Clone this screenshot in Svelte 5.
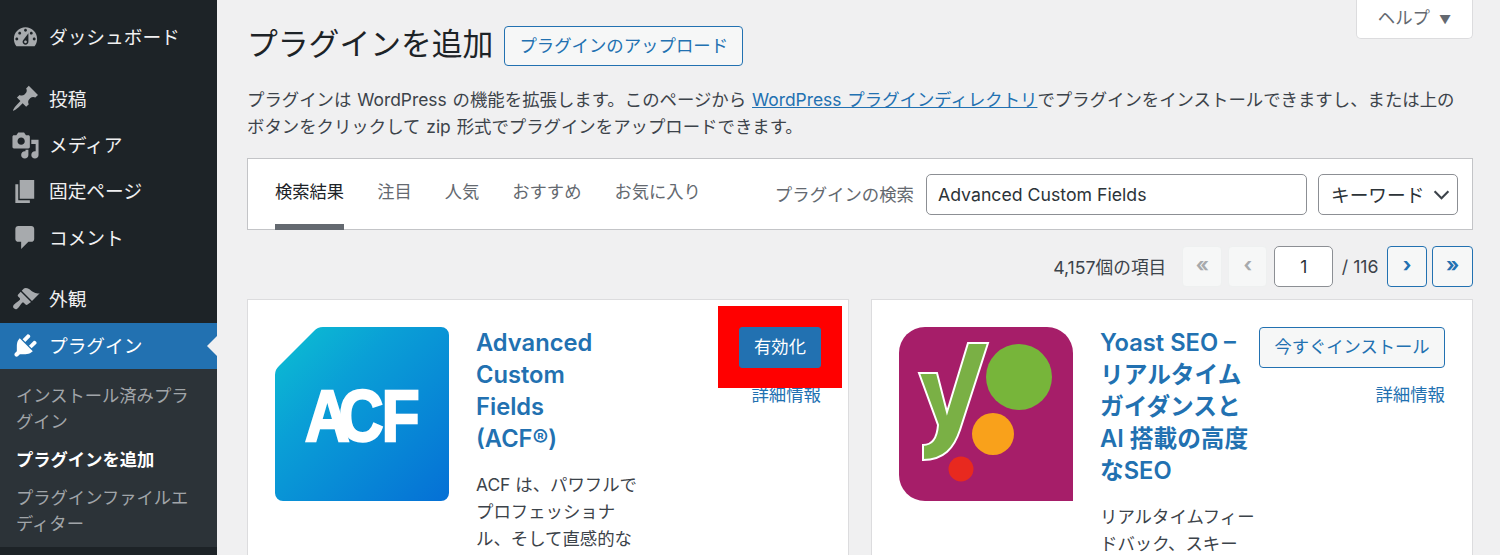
<script>
  const menu = [
    { label: 'ダッシュボード', d: 'M3.76 16h12.48c1.1-1.37 1.76-3.11 1.76-5 0-4.42-3.58-8-8-8s-8 3.58-8 8c0 1.89.66 3.63 1.76 5zM10 4c.55 0 1 .45 1 1s-.45 1-1 1-1-.45-1-1 .45-1 1-1zM6 6c.55 0 1 .45 1 1s-.45 1-1 1-1-.45-1-1 .45-1 1-1zm8 0c.55 0 1 .45 1 1s-.45 1-1 1-1-.45-1-1 .45-1 1-1zm-5.37 5.55L12 7v6c0 1.1-.9 2-2 2s-2-.9-2-2c0-.57.24-1.08.63-1.45zM4 10c.55 0 1 .45 1 1s-.45 1-1 1-1-.45-1-1 .45-1 1-1zm12 0c.55 0 1 .45 1 1s-.45 1-1 1-1-.45-1-1 .45-1 1-1zm-5 3c0-.55-.45-1-1-1s-1 .45-1 1 .45 1 1 1 1-.45 1-1z', gap: true },
    { label: '投稿', d: 'M10.44 3.02l1.82-1.82 6.36 6.35-1.83 1.82c-1.05-.68-2.48-.57-3.41.36l-.75.75c-.92.93-1.04 2.35-.35 3.41l-1.83 1.82-2.41-2.41-2.8 2.79c-.42.42-3.38 2.71-3.8 2.29s1.86-3.39 2.28-3.81l2.79-2.79L4.1 9.36l1.83-1.82c1.05.69 2.48.57 3.4-.36l.75-.75c.93-.92 1.05-2.35.36-3.41z' },
    { label: 'メディア', d: 'M13 11V4c0-.55-.45-1-1-1h-1.67L9 1H5L3.67 3H2c-.55 0-1 .45-1 1v7c0 .55.45 1 1 1h10c.55 0 1-.45 1-1zM7 4.5c1.38 0 2.5 1.12 2.5 2.5S8.38 9.5 7 9.5 4.5 8.38 4.5 7 5.62 4.5 7 4.5zM14 6h5v10.5c0 1.38-1.12 2.5-2.5 2.5S14 17.88 14 16.5s1.12-2.5 2.5-2.5c.17 0 .34.02.5.05V9h-3V6zm-4 8.05V13h2v3.5c0 1.38-1.12 2.5-2.5 2.5S7 17.88 7 16.5 8.12 14 9.5 14c.17 0 .34.02.5.05z' },
    { label: '固定ページ', d: 'M6 15V2h10v13H6zm-1 1h8v2H3V5h2v11z' },
    { label: 'コメント', d: 'M5 2h9c1.1 0 2 .9 2 2v7c0 1.1-.9 2-2 2h-2l-5 5v-5H5c-1.1 0-2-.9-2-2V4c0-1.1.9-2 2-2z', gap: true },
    { label: '外観', d: 'M14.48 11.06L7.41 3.99l1.5-1.5c.5-.56 2.3-.47 3.51.32 1.21.8 1.43 1.28 2.91 2.1 1.18.64 2.45 1.26 4.45.85zm-.71.71L6.7 4.7 4.93 6.47c-.39.39-.39 1.02 0 1.41l1.06 1.06c.39.39.39 1.03 0 1.42-.6.6-1.43 1.11-2.21 1.69-.35.26-.7.53-1.01.84C1.43 13.71.96 15.12 1.95 16.1c.99 1 2.4.53 3.07-.47.31-.31.58-.66.84-1 .58-.79 1.09-1.62 1.69-2.22.39-.39 1.03-.39 1.42 0l1.06 1.06c.39.39 1.02.39 1.41 0z' },
    { label: 'プラグイン', active: true, d: 'M13.11 4.36L9.87 7.6 8 5.73l3.24-3.24c.35-.34 1.05-.2 1.56.32.52.51.66 1.21.31 1.55zm-8 1.77l.91-1.12 9.01 9.01-1.19.84c-.71.71-2.63 1.16-3.82 1.16H6.14L4.9 17.26c-.59.59-1.54.59-2.12 0-.59-.58-.59-1.53 0-2.12l1.24-1.24v-3.88c0-1.13.4-3.19 1.09-3.89zm7.26 3.97l3.24-3.24c.34-.35 1.04-.21 1.55.31.52.51.66 1.21.31 1.55l-3.24 3.25z' }
  ];
  const tabs = ['検索結果', '注目', '人気', 'おすすめ', 'お気に入り'];
</script>

<div class="admin">
  <nav class="sidebar">
    <ul class="menu">
      {#each menu as item}
        <li class="item" class:active={item.active} class:gap={item.gap}>
          <svg class="ico" viewBox="0 0 20 20"><path d={item.d} /></svg>
          <span class="label">{item.label}</span>
        </li>
      {/each}
    </ul>
    <ul class="sub">
      <li>インストール済みプラグイン</li>
      <li class="current">プラグインを追加</li>
      <li>プラグインファイルエディター</li>
    </ul>
  </nav>

  <main class="content">
    <div class="help-row">
      <button class="help">ヘルプ<i class="tri">▼</i></button>
    </div>

    <div class="head">
      <h1>プラグインを追加</h1>
      <button class="upload">プラグインのアップロード</button>
    </div>

    <p class="intro">プラグインは WordPress の機能を拡張します。このページから <a href="#top">WordPress プラグインディレクトリ</a>でプラグインをインストールできますし、または上のボタンをクリックして zip 形式でプラグインをアップロードできます。</p>

    <div class="filter">
      <ul class="tabs">
        {#each tabs as t, i}
          <li class:on={i === 0}>{t}</li>
        {/each}
      </ul>
      <div class="search">
        <span class="search-label">プラグインの検索</span>
        <input class="search-input" value="Advanced Custom Fields" />
        <div class="select">
          <span class="select-text">キーワード</span>
          <svg viewBox="0 0 16 16" class="chev"><path d="M1.5 5L8 11.5 14.5 5" /></svg>
        </div>
      </div>
    </div>

    <div class="pager">
      <span class="count">4,157個の項目</span>
      <span class="pg off">«</span>
      <span class="pg off narrow">‹</span>
      <input class="page-no" value="1" />
      <span class="total">/ 116</span>
      <span class="pg">›</span>
      <span class="pg last">»</span>
    </div>

    <div class="cards">
      <section class="card">
        <svg class="plugin-icon" viewBox="0 0 174 174">
          <defs>
            <linearGradient id="acfg" x1="0" y1="0" x2="1" y2="1">
              <stop offset="0" stop-color="#0cc0d2" />
              <stop offset="0.35" stop-color="#0a9fd6" />
              <stop offset="1" stop-color="#0570d6" />
            </linearGradient>
          </defs>
          <path d="M48 0H166a8 8 0 0 1 8 8V166a8 8 0 0 1-8 8H8a8 8 0 0 1-8-8V48a12 12 0 0 1 4-9L39 4a12 12 0 0 1 9-4z" fill="url(#acfg)" />
          <text transform="scale(.86 1)" x="35 74 124" y="114" class="acf-mark">ACF</text>
        </svg>
        <div class="name-col wide">
          <h3 class="acf-name">Advanced Custom Fields (ACF®)</h3>
          <p class="desc">ACF は、パワフルでプロフェッショナル、そして直感的な</p>
        </div>
        <div class="actions">
          <div class="red">
            <button class="primary">有効化</button>
          </div>
          <a class="more" href="#top">詳細情報</a>
        </div>
      </section>

      <section class="card">
        <svg class="plugin-icon" viewBox="0 0 174 174">
          <path d="M26 0H148a26 26 0 0 1 26 26V174H26A26 26 0 0 1 0 148V26A26 26 0 0 1 26 0z" fill="#a61e69" />
          <path d="M20 46H38L48 85 69 16H89L61 103C55 121 45 133 24 133V118C33 118 38 112 39 98Z" fill="#7ab045" stroke="#fff" stroke-width="2" />
          <circle cx="120" cy="50" r="33" fill="#77b53a" />
          <circle cx="94" cy="107" r="21" fill="#f9a11b" />
          <circle cx="62" cy="142" r="12.5" fill="#e8291f" />
        </svg>
        <div class="name-col">
          <h3>Yoast SEO – リアルタイムガイダンスと AI 搭載の高度なSEO</h3>
          <p class="desc">リアルタイムフィー<br />ドバック、スキー</p>
        </div>
        <div class="actions">
          <button class="install">今すぐインストール</button>
          <a class="more" href="#top">詳細情報</a>
        </div>
      </section>
    </div>
  </main>
</div>

<style>
  :global(body) {
    margin: 0;
    background: #f0f0f1;
  }
  .admin {
    width: 1500px;
    height: 555px;
    overflow: hidden;
    display: flex;
    font-family: Inter, "Noto Sans CJK JP", sans-serif;
    color: #3c434a;
    font-size: 17.4px;
  }
  ul {
    list-style: none;
    margin: 0;
    padding: 0;
  }
  button {
    font-family: inherit;
  }

  .sidebar {
    width: 217px;
    flex: none;
    background: #1d2327;
    padding-top: 14px;
    box-sizing: border-box;
  }
  .item {
    height: 46.3px;
    display: flex;
    align-items: center;
    gap: 9px;
    padding-left: 11px;
    font-size: 18.7px;
    color: #f0f0f1;
    position: relative;
  }
  .label {
    padding-bottom: 3px;
  }
  .item.gap {
    margin-bottom: 15.4px;
  }
  .ico {
    width: 29px;
    height: 29px;
    fill: #a7aaad;
    flex: none;
  }
  .item.active {
    background: #2271b1;
    color: #fff;
  }
  .item.active .ico {
    fill: #fff;
  }
  .item.active::after {
    content: "";
    position: absolute;
    right: 0;
    top: 13px;
    border: 10px solid transparent;
    border-right-color: #f0f0f1;
    border-left: 0;
  }
  .sub {
    background: #2c3338;
    padding: 14px 16px 10px;
    height: 178px;
    box-sizing: border-box;
    font-size: 17.3px;
    line-height: 26px;
    color: #a1a5a9;
  }
  .sub li {
    margin-bottom: 12px;
  }
  .sub .current {
    color: #fff;
    font-weight: 700;
  }

  .content {
    flex: 1;
    padding: 0 27px 0 30px;
    min-width: 0;
  }
  .help-row {
    height: 0;
    display: flex;
    justify-content: flex-end;
  }
  .help {
    width: 117px;
    height: 39px;
    box-sizing: border-box;
    background: #fff;
    border: 1px solid #dcdcde;
    border-top: 0;
    border-radius: 0 0 5px 5px;
    color: #646970;
    font-size: 17.4px;
    padding: 0 0 5px;
  }
  .tri {
    font-style: normal;
    font-size: 12px;
    margin-left: 9px;
  }
  .head {
    display: flex;
    align-items: center;
    gap: 11px;
    padding-top: 26px;
    height: 40px;
  }
  h1 {
    margin: 0 0 4px;
    font-size: 30.8px;
    font-weight: 400;
    color: #1d2327;
    line-height: 40px;
  }
  .upload {
    height: 40px;
    padding: 0 14px 4px;
    background: #f6f7f7;
    border: 1px solid #2271b1;
    border-radius: 4px;
    color: #2271b1;
    font-size: 17.4px;
  }
  .intro {
    margin: 20px 0 0;
    padding-right: 10px;
    line-height: 27px;
    color: #3c434a;
    word-spacing: 1px;
  }
  .intro a,
  .more {
    color: #2271b1;
  }
  .intro a {
    text-decoration: underline;
  }
  .filter {
    margin-top: 18px;
    height: 72px;
    box-sizing: border-box;
    background: #fff;
    border: 1px solid #c3c4c7;
    display: flex;
    justify-content: space-between;
    padding: 0 14px 0 27px;
  }
  .tabs {
    display: flex;
    gap: 33px;
    font-size: 17.3px;
  }
  .tabs li {
    height: 71px;
    box-sizing: border-box;
    line-height: 65px;
    color: #646970;
    border-bottom: 6px solid transparent;
  }
  .tabs .on {
    color: #1d2327;
    border-bottom-color: #646970;
  }
  .search {
    display: flex;
    align-items: center;
    height: 71px;
  }
  .search-label {
    color: #646970;
    margin-right: 12px;
    padding-bottom: 3px;
  }
  .search-input {
    width: 381px;
    height: 41px;
    box-sizing: border-box;
    border: 1px solid #8c8f94;
    border-radius: 5px;
    padding: 0 11px;
    font: inherit;
    font-size: 17.7px;
    color: #2c3338;
    margin-right: 11px;
  }
  .select {
    width: 140px;
    height: 41px;
    box-sizing: border-box;
    border: 1px solid #8c8f94;
    border-radius: 5px;
    display: flex;
    align-items: center;
    justify-content: space-between;
    padding: 0 7px 0 12px;
    color: #2c3338;
    font-size: 18.7px;
  }
  .select-text {
    padding-bottom: 3px;
  }
  .chev {
    width: 17px;
    height: 17px;
    fill: none;
    stroke: #3c434a;
    stroke-width: 2;
  }

  .pager {
    display: flex;
    align-items: center;
    justify-content: flex-end;
    gap: 6px;
    height: 41px;
    margin-top: 16px;
  }
  .count {
    margin-right: 10px;
    color: #3c434a;
    font-size: 17.7px;
    padding-bottom: 2px;
  }
  .pg {
    width: 40px;
    height: 41px;
    box-sizing: border-box;
    border: 1px solid #2271b1;
    border-radius: 4px;
    background: #f6f7f7;
    color: #2271b1;
    font-size: 20px;
    font-weight: 700;
    display: flex;
    align-items: center;
    justify-content: center;
    line-height: 1;
    padding-bottom: 4px;
  }
  .pg.off {
    border-color: #eef0f0;
    color: #a7aaad;
  }
  .pg.narrow {
    width: 39px;
  }
  .pg.last {
    width: 41px;
    margin-left: -1px;
  }
  .page-no {
    width: 59px;
    height: 41px;
    box-sizing: border-box;
    border: 1px solid #8c8f94;
    border-radius: 5px;
    text-align: center;
    font: inherit;
    color: #2c3338;
    padding: 0;
    margin-left: 1px;
  }
  .total {
    margin: 0 2.5px;
    padding-bottom: 1px;
    font-size: 17.7px;
  }

  .cards {
    display: flex;
    gap: 22px;
    margin-top: 12px;
  }
  .card {
    width: 602px;
    height: 320px;
    box-sizing: border-box;
    background: #fff;
    border: 1px solid #dcdcde;
    padding: 27px 27px 0;
    display: flex;
    flex: none;
  }
  .plugin-icon {
    width: 174px;
    height: 174px;
    flex: none;
  }
  .acf-mark {
    font-family: "Liberation Sans", sans-serif;
    font-weight: 700;
    font-size: 72px;
    fill: #fff;
    stroke: #fff;
    stroke-width: 2.5;
  }
  .name-col {
    width: 158px;
    margin-left: 27px;
    flex: none;
  }
  .name-col.wide {
    width: 163px;
  }
  h3 {
    margin: 0;
    font-size: 23.7px;
    line-height: 32px;
    font-weight: 600;
    color: #2271b1;
  }
  .acf-name {
    width: 125px;
  }
  .desc {
    margin: 16px 0 0;
    line-height: 27px;
    color: #3c434a;
  }
  .actions {
    margin-left: auto;
    display: flex;
    flex-direction: column;
    align-items: flex-end;
    gap: 17px;
  }
  .red {
    background: #f00;
    width: 124px;
    height: 82px;
    margin: -21px -21px -20px 0;
    box-sizing: border-box;
    padding: 21px 21px 0 21px;
    position: relative;
    z-index: 1;
  }
  .primary {
    width: 82px;
    height: 41px;
    background: #2271b1;
    color: #fff;
    border: 1px solid #2271b1;
    border-radius: 3px;
    font-size: 17.3px;
    padding: 0 0 4px;
  }
  .install {
    width: 186px;
    height: 41px;
    background: #f6f7f7;
    color: #2271b1;
    border: 1px solid #2271b1;
    border-radius: 4px;
    font-size: 17.3px;
    padding: 0 0 4px;
  }
  .more {
    text-decoration: none;
    line-height: 20px;
  }
</style>
